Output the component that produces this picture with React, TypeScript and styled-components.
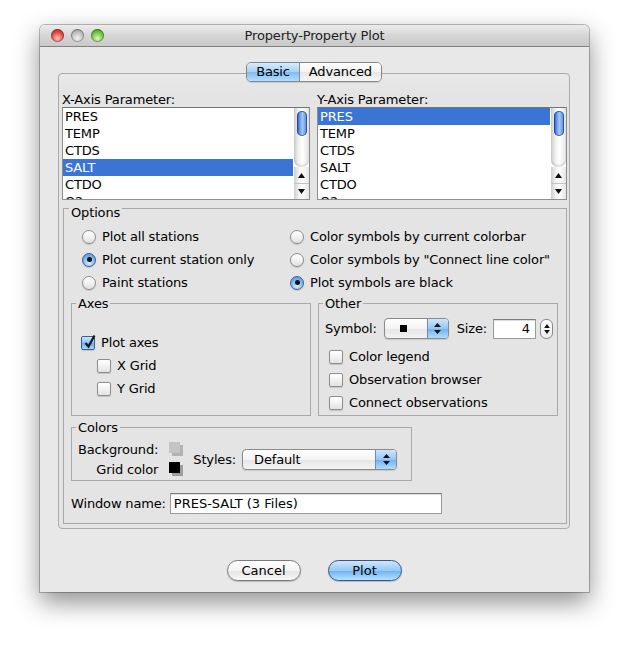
import React from "react";
import styled, { createGlobalStyle } from "styled-components";

const GlobalStyle = createGlobalStyle`
  html, body {
    margin: 0;
    padding: 0;
    background: #fff;
  }
  body {
    font-family: "Lucida Grande", "DejaVu Sans", sans-serif;
    font-size: 13px;
    letter-spacing: -0.15px;
    color: #000;
  }
`;

const Page = styled.div`
  width: 629px;
  height: 647px;
  padding: 25px 40px 0;
  box-sizing: border-box;
  overflow: hidden;
`;

const Window = styled.div`
  width: 549px;
  height: 567px;
  background: #e8e8e8;
  border-radius: 5px 5px 0 0;
  box-shadow: 0 0 0 1px rgba(0, 0, 0, 0.25), 0 10px 26px rgba(0, 0, 0, 0.45);
  display: flex;
  flex-direction: column;
`;

const TitleBar = styled.div`
  height: 21px;
  display: grid;
  grid-template-columns: 1fr auto 1fr;
  align-items: center;
  background: linear-gradient(#ececec, #d6d6d6 50%, #c9c9c9);
  border-bottom: 1px solid #808080;
  border-radius: 5px 5px 0 0;
`;

const Lights = styled.div`
  display: flex;
  gap: 7px;
  padding-left: 11px;
`;

const lightColors = {
  red: ["#ffc2bc", "#e2463f", "#9e2a24"],
  grey: ["#f2f2f2", "#bdbdbd", "#8d8d8d"],
  green: ["#d9f7b8", "#6ec23f", "#3c7d1c"],
};

const Light = styled.span<{ $tone: keyof typeof lightColors }>`
  width: 13px;
  height: 13px;
  border-radius: 50%;
  background: ${({ $tone }) =>
    `radial-gradient(circle at 50% 72%, ${lightColors[$tone][0]}, ${lightColors[$tone][1]} 55%, ${lightColors[$tone][2]})`};
  box-shadow: inset 0 0 0 1px rgba(0, 0, 0, 0.3);
`;

const Title = styled.div`
  color: #222;
  line-height: 21px;
`;

const Body = styled.div`
  flex: 1;
  display: flex;
  flex-direction: column;
  padding: 15px 19px 0 18px;
`;

const TabsRow = styled.div`
  display: flex;
  justify-content: center;
  position: relative;
  z-index: 1;
`;

const Segmented = styled.div`
  display: flex;
  height: 20px;
  box-sizing: border-box;
  border: 1px solid #868686;
  border-radius: 5px;
  overflow: hidden;
  box-shadow: 0 1px 1px rgba(0, 0, 0, 0.12);
`;

const Tab = styled.div<{ $active?: boolean }>`
  padding: 0 9px;
  line-height: 18px;
  & + & {
    border-left: 1px solid #8a8a8a;
  }
  background: ${({ $active }) =>
    $active
      ? "linear-gradient(#d6ebfd, #a5d0f7 50%, #80bbf2 51%, #b3defd)"
      : "linear-gradient(#ffffff, #f3f3f3 50%, #e6e6e6 51%, #f6f6f6)"};
`;

const Pane = styled.div`
  margin-top: -9px;
  border: 1px solid #ababab;
  border-radius: 4px;
  background: linear-gradient(#e9e9e9, #e4e4e4 18px, #e4e4e4);
  padding: 18px 2px 4px 3px;
`;

const ListsRow = styled.div`
  display: grid;
  grid-template-columns: 248px 250px;
  column-gap: 7px;
`;

const FieldLabel = styled.div`
  line-height: 15px;
`;

const ListBox = styled.div`
  height: 93px;
  box-sizing: border-box;
  border: 1px solid #8e8e8e;
  border-top-color: #737373;
  background: #fff;
  display: flex;
`;

const ListItems = styled.div`
  flex: 1;
  overflow: hidden;
  margin-right: 1px;
`;

const ListRow = styled.div<{ $selected?: boolean }>`
  height: 17px;
  line-height: 17px;
  padding-left: 2px;
  background: ${({ $selected }) => ($selected ? "#3a75d6" : "transparent")};
  color: ${({ $selected }) => ($selected ? "#fff" : "#000")};
`;

const trackGradient =
  "linear-gradient(to right, #cdcdcd, #f0f0f0 30%, #ffffff 55%, #e4e4e4)";

const ScrollBar = styled.div`
  width: 15px;
  display: flex;
  flex-direction: column;
  background: #fff;
`;

const Track = styled.div`
  flex: 1;
  display: flex;
  justify-content: center;
  padding-top: 3px;
  background: ${trackGradient};
  border-radius: 0 0 7px 7px;
  box-shadow: inset 0 -2px 2px rgba(0, 0, 0, 0.12);
`;

const Thumb = styled.div`
  width: 10px;
  height: 25px;
  border-radius: 5px;
  background: linear-gradient(to right, #2a58b3, #78a8ef 35%, #a2c8f7 55%, #4d85dc);
  box-shadow: inset 0 0 0 1px rgba(25, 55, 125, 0.65);
`;

const ArrowButton = styled.div`
  height: 16px;
  box-sizing: border-box;
  display: flex;
  align-items: center;
  justify-content: center;
  background: ${trackGradient};
  & + & {
    border-top: 1px solid #c4c4c4;
  }
`;

const OptionsBox = styled.fieldset`
  margin: -3px 0 0 1px;
  padding: 0;
  min-width: 0;
  border: 1px solid #a9a9a9;
`;

const GroupBox = styled.fieldset<{ $width?: number }>`
  margin: 0;
  padding: 0;
  min-width: 0;
  border: 1px solid #a9a9a9;
  flex: ${({ $width }) => ($width ? "none" : "1")};
  width: ${({ $width }) => ($width ? `${$width}px` : "auto")};
`;

const GroupTitle = styled.legend<{ $raised?: boolean }>`
  margin-left: ${({ $raised }) => ($raised ? 5 : 4)}px;
  padding: ${({ $raised }) => ($raised ? "8px 2px 0" : "0 2px")};
  line-height: 15px;
`;

const RadioGrid = styled.div`
  display: grid;
  grid-template-columns: 208px 1fr;
  grid-auto-rows: 23px;
  padding: 5px 0 0 18px;
`;

const Choice = styled.label<{ $indent?: number }>`
  display: flex;
  align-items: center;
  gap: 6px;
  height: 23px;
  padding-left: ${({ $indent }) => $indent ?? 0}px;
`;

const RadioDot = styled.span<{ $on?: boolean }>`
  width: 14px;
  height: 14px;
  box-sizing: border-box;
  border-radius: 50%;
  border: 1px solid ${({ $on }) => ($on ? "#3d5e93" : "#8d8d8d")};
  display: flex;
  align-items: center;
  justify-content: center;
  background: ${({ $on }) =>
    $on
      ? "radial-gradient(circle at 50% 75%, #d8f0ff, #7cb6ef 55%, #4d8ad6)"
      : "linear-gradient(#ffffff, #f2f2f2 50%, #e0e0e0)"};
  box-shadow: 0 1px 1px rgba(0, 0, 0, 0.15);
  &::after {
    content: "";
    width: 5px;
    height: 5px;
    border-radius: 50%;
    background: #111;
    display: ${({ $on }) => ($on ? "block" : "none")};
  }
`;

const CheckBoxMark = styled.span<{ $on?: boolean }>`
  width: 14px;
  height: 14px;
  box-sizing: border-box;
  border-radius: 2px;
  border: 1px solid ${({ $on }) => ($on ? "#3d5e93" : "#8d8d8d")};
  position: relative;
  background: ${({ $on }) =>
    $on
      ? "linear-gradient(#c9e5fc, #8cc0f2 50%, #6aaaeb 51%, #a8d6fb)"
      : "linear-gradient(#ffffff, #f2f2f2 50%, #e2e2e2)"};
  box-shadow: 0 1px 1px rgba(0, 0, 0, 0.15);
  svg {
    position: absolute;
    left: 1px;
    top: -3px;
  }
`;

const GroupRow = styled.div`
  display: flex;
  gap: 7px;
  margin-top: 2px;
  padding: 0 8px 0 7px;
`;

const AxesBody = styled.div`
  padding: 20px 0 15px 9px;
`;

const OtherBody = styled.div`
  padding: 7px 0 0 6px;
`;

const SymbolRow = styled.div`
  display: flex;
  align-items: center;
  height: 21px;
  margin-bottom: 6px;
`;

const InlineLabel = styled.span<{ $gap?: number }>`
  margin-left: ${({ $gap }) => $gap ?? 0}px;
`;

const Combo = styled.div<{ $width: number; $gap?: number }>`
  width: ${({ $width }) => $width}px;
  height: 21px;
  box-sizing: border-box;
  margin-left: ${({ $gap }) => $gap ?? 0}px;
  border: 1px solid #8a8a8a;
  border-radius: 4px;
  display: flex;
  overflow: hidden;
  background: linear-gradient(#ffffff, #f4f4f4 50%, #e6e6e6 51%, #f2f2f2);
  box-shadow: 0 1px 1px rgba(0, 0, 0, 0.12);
`;

const ComboValue = styled.div<{ $center?: boolean }>`
  flex: 1;
  line-height: 19px;
  padding-left: ${({ $center }) => ($center ? 0 : 11)}px;
  display: flex;
  align-items: center;
  justify-content: ${({ $center }) => ($center ? "center" : "flex-start")};
`;

const ComboArrow = styled.div`
  width: 20px;
  border-left: 1px solid #6c8cc0;
  display: flex;
  align-items: center;
  justify-content: center;
  background: linear-gradient(#cfe6fc, #95c6f4 50%, #6fb0ef 51%, #b0dcfd);
`;

const SymbolGlyph = styled.span`
  width: 7px;
  height: 7px;
  background: #000;
  margin-right: 4px;
`;

const NumberField = styled.input`
  width: 43px;
  height: 20px;
  box-sizing: border-box;
  margin-left: 6px;
  border: 1px solid #9b9b9b;
  border-top-color: #7d7d7d;
  background: #fff;
  box-shadow: inset 0 1px 1px rgba(0, 0, 0, 0.15);
  font: inherit;
  text-align: right;
  padding: 0 5px 0 0;
  outline: none;
`;

const Stepper = styled.div`
  width: 13px;
  height: 20px;
  box-sizing: border-box;
  margin-left: 4px;
  border: 1px solid #8a8a8a;
  border-radius: 6px;
  background: linear-gradient(#ffffff, #ececec);
  display: flex;
  flex-direction: column;
  align-items: center;
  justify-content: center;
  gap: 2px;
`;

const CheckList = styled.div`
  padding-left: 4px;
`;

const ColorsRow = styled.div`
  padding: 0 7px;
  margin-top: 4px;
`;

const ColorsBody = styled.div`
  display: flex;
  align-items: center;
  padding: 4px 0 1px 6px;
`;

const SwatchGrid = styled.div`
  display: grid;
  grid-template-columns: auto 14px;
  grid-auto-rows: 20px;
  column-gap: 11px;
  align-items: center;
  justify-items: end;
`;

const Swatch = styled.span<{ $fill: string; $shade: string }>`
  width: 11px;
  height: 11px;
  margin: 0 3px 3px 0;
  background: ${({ $fill }) => $fill};
  box-shadow: 3px 3px 0 ${({ $shade }) => $shade};
`;

const NameRow = styled.div`
  display: flex;
  align-items: center;
  gap: 4px;
  margin-top: 12px;
  padding: 0 0 9px 7px;
`;

const TextField = styled.input`
  width: 272px;
  height: 21px;
  box-sizing: border-box;
  border: 1px solid #9b9b9b;
  border-top-color: #7d7d7d;
  background: #fff;
  box-shadow: inset 0 1px 1px rgba(0, 0, 0, 0.15);
  font: inherit;
  padding: 0 0 0 3px;
  outline: none;
`;

const ButtonRow = styled.div`
  display: flex;
  justify-content: center;
  gap: 27px;
  margin-top: 31px;
`;

const PushButton = styled.button<{ $primary?: boolean }>`
  width: 74px;
  height: 21px;
  border-radius: 11px;
  border: 1px solid ${({ $primary }) => ($primary ? "#38548c" : "#7a7a7a")};
  font: inherit;
  color: #000;
  padding: 0;
  box-shadow: 0 1px 1px rgba(0, 0, 0, 0.2);
  background: ${({ $primary }) =>
    $primary
      ? "linear-gradient(#cfe7fd, #95c8f5 50%, #6fb1f0 51%, #b6e0fe)"
      : "linear-gradient(#ffffff, #f4f4f4 50%, #e4e4e4 51%, #f7f7f7)"};
`;

const Triangle = ({ up, size = 7 }: { up?: boolean; size?: number }) => (
  <svg width={size} height={Math.round(size * 0.7)} viewBox="0 0 10 7">
    <path d={up ? "M5 0 L10 7 L0 7 Z" : "M0 0 L10 0 L5 7 Z"} fill="#111" />
  </svg>
);

const UpDown = () => (
  <svg width="7" height="11" viewBox="0 0 7 11">
    <path d="M3.5 0 L7 4 L0 4 Z M0 7 L7 7 L3.5 11 Z" fill="#111" />
  </svg>
);

const ParamList = ({ items, selected }: { items: string[]; selected: string }) => (
  <ListBox>
    <ListItems>
      {items.map((item) => (
        <ListRow key={item} $selected={item === selected}>
          {item}
        </ListRow>
      ))}
    </ListItems>
    <ScrollBar>
      <Track>
        <Thumb />
      </Track>
      <ArrowButton>
        <Triangle up />
      </ArrowButton>
      <ArrowButton>
        <Triangle />
      </ArrowButton>
    </ScrollBar>
  </ListBox>
);

const Radio = ({ on, label }: { on?: boolean; label: string }) => (
  <Choice>
    <RadioDot $on={on} />
    {label}
  </Choice>
);

const Check = ({ on, label, indent }: { on?: boolean; label: string; indent?: number }) => (
  <Choice $indent={indent}>
    <CheckBoxMark $on={on}>
      {on && (
        <svg width="14" height="15" viewBox="0 0 14 15">
          <path d="M2.5 9 L5.5 12.5 L11.5 1.5" stroke="#1a1a1a" strokeWidth="2.2" fill="none" />
        </svg>
      )}
    </CheckBoxMark>
    {label}
  </Choice>
);

const params = ["PRES", "TEMP", "CTDS", "SALT", "CTDO", "O2"];

const App = () => {
  return (
    <Page>
      <GlobalStyle />
      <Window>
        <TitleBar>
          <Lights>
            <Light $tone="red" />
            <Light $tone="grey" />
            <Light $tone="green" />
          </Lights>
          <Title>Property-Property Plot</Title>
          <div />
        </TitleBar>
        <Body>
          <TabsRow>
            <Segmented>
              <Tab $active>Basic</Tab>
              <Tab>Advanced</Tab>
            </Segmented>
          </TabsRow>
          <Pane>
            <ListsRow>
              <div>
                <FieldLabel>X-Axis Parameter:</FieldLabel>
                <ParamList items={params} selected="SALT" />
              </div>
              <div>
                <FieldLabel>Y-Axis Parameter:</FieldLabel>
                <ParamList items={params} selected="PRES" />
              </div>
            </ListsRow>

            <OptionsBox>
              <GroupTitle $raised>Options</GroupTitle>
              <RadioGrid>
                <Radio label="Plot all stations" />
                <Radio label="Color symbols by current colorbar" />
                <Radio on label="Plot current station only" />
                <Radio label={'Color symbols by "Connect line color"'} />
                <Radio label="Paint stations" />
                <Radio on label="Plot symbols are black" />
              </RadioGrid>

              <GroupRow>
                <GroupBox>
                  <GroupTitle>Axes</GroupTitle>
                  <AxesBody>
                    <Check on label="Plot axes" />
                    <Check label="X Grid" indent={16} />
                    <Check label="Y Grid" indent={16} />
                  </AxesBody>
                </GroupBox>
                <GroupBox>
                  <GroupTitle>Other</GroupTitle>
                  <OtherBody>
                    <SymbolRow>
                      <InlineLabel>Symbol:</InlineLabel>
                      <Combo $width={65} $gap={7}>
                        <ComboValue $center>
                          <SymbolGlyph />
                        </ComboValue>
                        <ComboArrow>
                          <UpDown />
                        </ComboArrow>
                      </Combo>
                      <InlineLabel $gap={8}>Size:</InlineLabel>
                      <NumberField readOnly value="4" />
                      <Stepper>
                        <Triangle up size={6} />
                        <Triangle size={6} />
                      </Stepper>
                    </SymbolRow>
                    <CheckList>
                      <Check label="Color legend" />
                      <Check label="Observation browser" />
                      <Check label="Connect observations" />
                    </CheckList>
                  </OtherBody>
                </GroupBox>
              </GroupRow>

              <ColorsRow>
                <GroupBox $width={339}>
                  <GroupTitle>Colors</GroupTitle>
                  <ColorsBody>
                    <SwatchGrid>
                      <span>Background:</span>
                      <Swatch $fill="#c4c4c4" $shade="#b3b3b3" />
                      <span>Grid color</span>
                      <Swatch $fill="#000" $shade="#9e9e9e" />
                    </SwatchGrid>
                    <InlineLabel $gap={10}>Styles:</InlineLabel>
                    <Combo $width={155} $gap={6}>
                      <ComboValue>Default</ComboValue>
                      <ComboArrow>
                        <UpDown />
                      </ComboArrow>
                    </Combo>
                  </ColorsBody>
                </GroupBox>
              </ColorsRow>

              <NameRow>
                <span>Window name:</span>
                <TextField readOnly value="PRES-SALT (3 Files)" />
              </NameRow>
            </OptionsBox>
          </Pane>
          <ButtonRow>
            <PushButton>Cancel</PushButton>
            <PushButton $primary>Plot</PushButton>
          </ButtonRow>
        </Body>
      </Window>
    </Page>
  );
};

export default App;
